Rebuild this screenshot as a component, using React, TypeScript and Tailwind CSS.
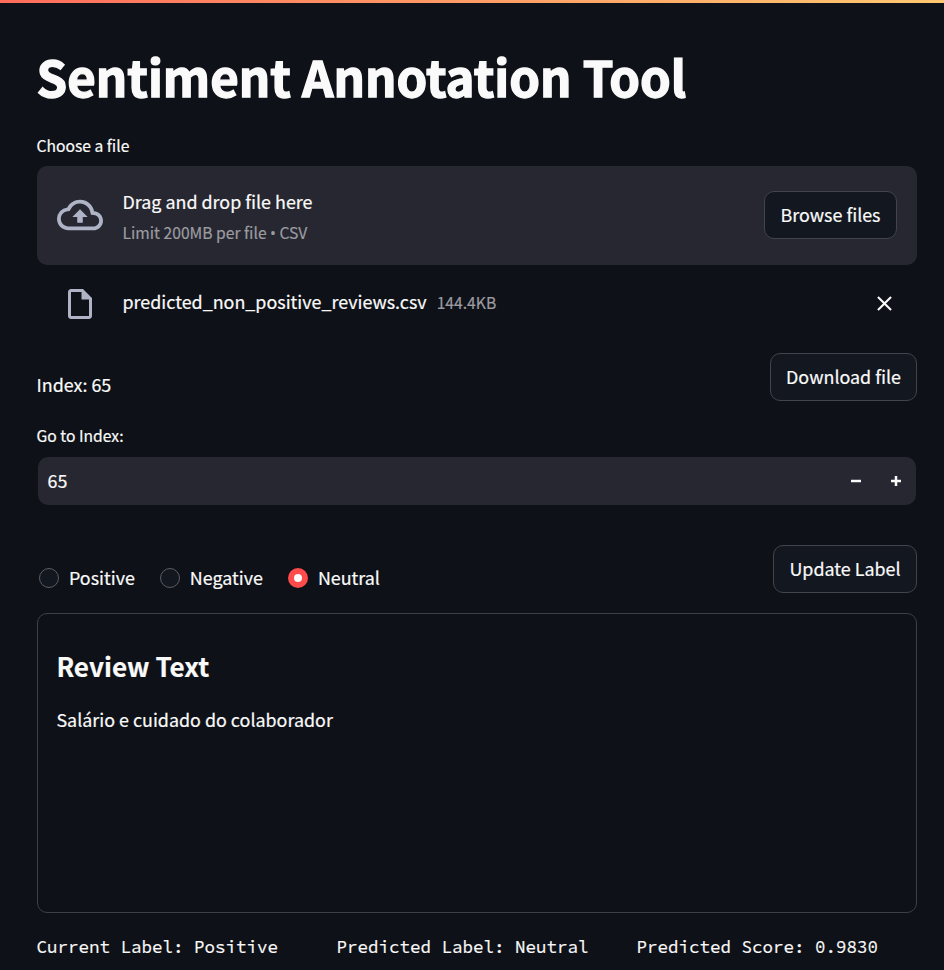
import type { ReactNode } from "react";

function Button({ children, className }: { children: ReactNode; className: string }) {
  return (
    <button
      className={`flex h-12 shrink-0 items-center justify-center whitespace-nowrap rounded-[10px] border border-[#41444c] bg-[#131720] pb-0.5 [-webkit-text-stroke:0.2px_#fafafa] ${className}`}
    >
      {children}
    </button>
  );
}

function Radio({ label, checked = false }: { label: string; checked?: boolean }) {
  return (
    <label className="flex items-center gap-2.5">
      {checked ? (
        <span className="flex size-5 items-center justify-center rounded-full bg-[#ff4b4b]">
          <span className="size-2 rounded-full bg-[#fafafa]" />
        </span>
      ) : (
        <span className="size-5 rounded-full border border-[#5c5e64] bg-[#131720]" />
      )}
      <span className="-mt-0.5">{label}</span>
    </label>
  );
}

export default function App() {
  return (
    <div className="h-[970px] overflow-hidden bg-[#0e1117] font-['Noto_Sans_CJK_SC','Open_Sans',sans-serif] text-[17.9px] leading-8 text-[#fafafa] [-webkit-text-stroke:0.2px_currentColor]">
      <div className="h-[3px] bg-linear-to-r from-[#ff6c5c] to-[#ffc870]" />
      <main className="flex flex-col pl-[37px] pr-[27px]">
        <h1 className="-ml-[0.5px] mt-[43px] h-[60px] whitespace-nowrap text-[49.15px] font-bold leading-[60px] [-webkit-text-stroke:1.4px_#fafafa]">
          Sentiment Annotation Tool
        </h1>

        <div className="-ml-[0.5px] mt-7 text-[15.67px] leading-6">Choose a file</div>
        <section className="mt-2 flex h-[99px] items-center rounded-[10px] bg-[#262730] px-5 pb-0.5">
          <svg className="size-[46px] shrink-0 fill-[#aeb3c6]" viewBox="0 0 24 24">
            <path d="M19.35 10.04A7.49 7.49 0 0 0 12 4C9.11 4 6.6 5.64 5.35 8.04A5.994 5.994 0 0 0 0 14c0 3.31 2.69 6 6 6h13c2.76 0 5-2.24 5-5 0-2.64-2.05-4.78-4.65-4.96zM19 18H6c-2.21 0-4-1.79-4-4 0-2.05 1.53-3.76 3.56-3.97l1.07-.11.5-.95A5.469 5.469 0 0 1 12 6c2.62 0 4.88 1.86 5.39 4.43l.3 1.5 1.53.11A2.98 2.98 0 0 1 22 15c0 1.65-1.35 3-3 3zM8 13h2.55v3h2.9v-3H16l-4-4z" />
          </svg>
          <div className="ml-[19.5px] mt-[3px] flex flex-1 flex-col gap-px">
            <div>Drag and drop file here</div>
            <div className="text-[15.67px] leading-[30px] text-[#9c9ca1]">
              Limit 200MB per file <span className="font-['Open_Sans',sans-serif] leading-none">•</span> CSV
            </div>
          </div>
          <Button className="w-[133px]">Browse files</Button>
        </section>

        <div className="mt-[19px] flex h-10 items-center pl-[25px] pr-5">
          <svg className="size-9 shrink-0 fill-[#aeb3c6]" viewBox="0 0 24 24">
            <path d="M14 2H6c-1.1 0-1.99.9-1.99 2L4 20c0 1.1.89 2 1.99 2H18c1.1 0 2-.9 2-2V8l-6-6zM6 20V4h7v5h5v11H6z" />
          </svg>
          <span className="-mt-1.5 ml-[24.5px]">predicted_non_positive_reviews.csv</span>
          <span className="-mt-0.5 ml-2.5 text-[15.67px] text-[#9c9ca1]">144.4KB</span>
          <svg className="-mt-0.5 ml-auto size-[25px] fill-[#fafafa]" viewBox="0 0 24 24">
            <path d="M19 6.41L17.59 5 12 10.59 6.41 5 5 6.41 10.59 12 5 17.59 6.41 19 12 13.41 17.59 19 19 17.59 13.41 12z" />
          </svg>
        </div>

        <div className="mt-[29px] flex h-12 items-start justify-between">
          <div className="-ml-[0.5px] mt-[15px]">Index: 65</div>
          <Button className="w-[147px]">Download file</Button>
        </div>

        <div className="-ml-[0.5px] mt-[23px] text-[15.67px] leading-6">Go to Index:</div>
        <div className="mx-px mt-[9px] flex h-12 items-center rounded-[10px] bg-[#262730] pl-[9.5px] pr-[15px]">
          <span className="-mt-0.5 flex-1">65</span>
          <svg className="size-2.5 fill-[#fafafa]" viewBox="0 0 8 8">
            <path d="M0 3v2h8V3z" />
          </svg>
          <svg className="ml-[30px] size-2.5 fill-[#fafafa]" viewBox="0 0 8 8">
            <path d="M3 0v3H0v2h3v3h2V5h3V3H5V0z" />
          </svg>
        </div>

        <div className="mt-10 flex h-12 items-start justify-between">
          <div className="ml-0.5 mt-[17px] flex h-8 gap-[25px]">
            <Radio label="Positive" />
            <Radio label="Negative" />
            <Radio label="Neutral" checked />
          </div>
          <Button className="w-36">Update Label</Button>
        </div>

        <section className="mt-5 h-[300px] rounded-[10px] border border-[#3d4045] px-[18.4px]">
          <h2 className="mt-[34px] text-[26.1px] font-bold leading-9">Review Text</h2>
          <p className="mt-[19px]">Salário e cuidado do colaborador</p>
        </section>

        <div className="-ml-[0.5px] mt-[18px] grid grid-cols-[300px_300px_1fr] whitespace-nowrap font-['Source_Code_Pro',monospace] text-[17.5px]">
          <span>Current Label: Positive</span>
          <span>Predicted Label: Neutral</span>
          <span>Predicted Score: 0.9830</span>
        </div>
      </main>
    </div>
  );
}
